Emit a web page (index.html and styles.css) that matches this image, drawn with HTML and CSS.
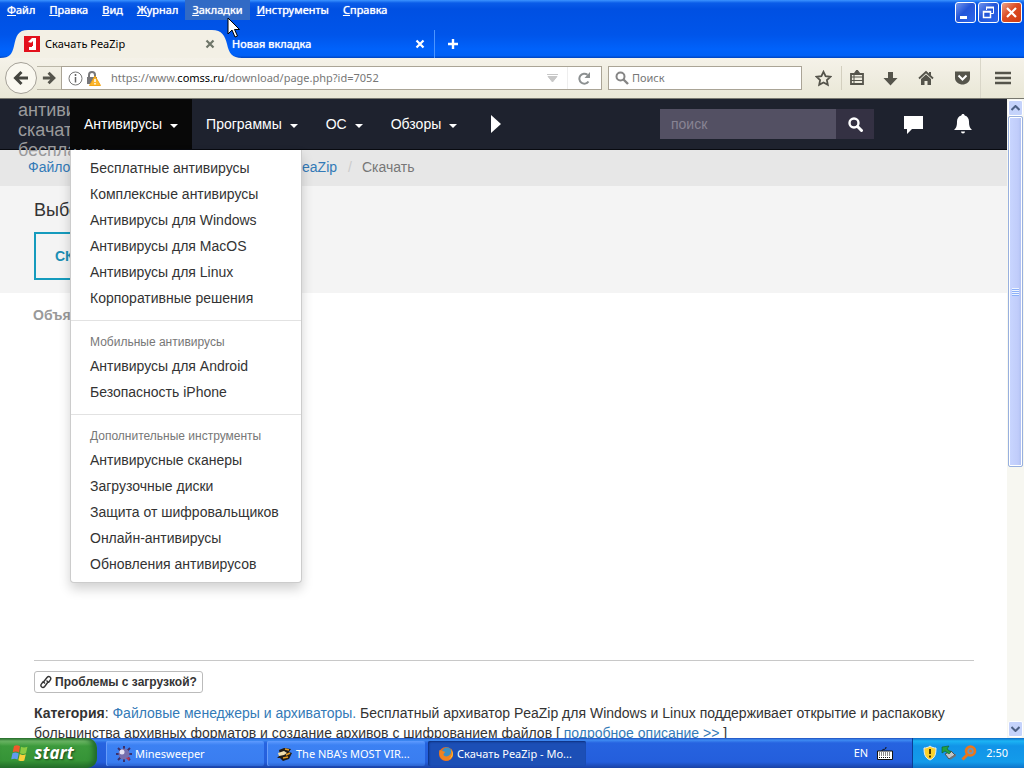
FILE: index.html
```html
<!DOCTYPE html>
<html lang="ru">
<head>
<meta charset="utf-8">
<title>Скачать PeaZip</title>
<link rel="stylesheet" href="styles.css">
</head>
<body>
<div class="titlebar">
  <div class="title-row">
    <nav class="menubar" aria-label="Меню">
      <button><u>Ф</u>айл</button>
      <button><u>П</u>равка</button>
      <button><u>В</u>ид</button>
      <button><u>Ж</u>урнал</button>
      <button class="hot"><u>З</u>акладки
        <svg class="cursor" width="14" height="21" viewBox="0 0 14 21" aria-hidden="true"><path d="M1 1v16l4-4 3 7 2.500-1-3-6.500h5z" fill="#fff" stroke="#000"/></svg>
      </button>
      <button><u>И</u>нструменты</button>
      <button><u>С</u>правка</button>
    </nav>
    <div class="window-buttons">
      <button aria-label="Свернуть"><svg width="19" height="19" viewBox="0 0 19 19"><path d="M4 14.500h7" stroke="#fff" stroke-width="3"/></svg></button>
      <button aria-label="Восстановить"><svg width="19" height="19" viewBox="0 0 19 19"><path d="M7.500 7V4.500h7v6H12" fill="none" stroke="#fff"/><path d="M7 4.500h8" stroke="#fff" stroke-width="2"/><path d="M4.500 8.500h7v6h-7zM4 9h8" fill="none" stroke="#fff" stroke-width="1.500"/></svg></button>
      <button class="close" aria-label="Закрыть"><svg width="19" height="19" viewBox="0 0 19 19"><path d="M5 5l9 9M14 5l-9 9" stroke="#fff" stroke-width="2.200"/></svg></button>
    </div>
  </div>
  <div class="tabs">
    <div class="tab active">
      <svg class="tab-shape" viewBox="0 0 242 28" preserveAspectRatio="none" aria-hidden="true"><path d="M0 28C10 28 12 24 14 16C16 6 18 0 28 0H212C222 0 225 6 227 14C229 23 232 28 242 28z" fill="#f3f0e5"/></svg>
      <svg width="16" height="16" viewBox="0 0 16 16" aria-hidden="true"><path d="M0 0h16v16H0z" fill="#e3101c"/><path d="M4 6l4-4h4v12H5v-3h3V7z" fill="#fff"/><path d="M7 7l2-2v5H7z" fill="#e3101c"/></svg>
      <span class="tab-title">Скачать PeaZip</span>
      <button class="tab-close" aria-label="Закрыть вкладку"><svg width="10" height="10" viewBox="0 0 10 10"><path d="M1.500 1.500l7 7M8.500 1.500l-7 7" stroke="#6f7669" stroke-width="2.200"/></svg></button>
    </div>
    <div class="tab second">
      <span class="tab-title">Новая вкладка</span>
      <button class="tab-close" aria-label="Закрыть вкладку"><svg width="10" height="10" viewBox="0 0 10 10"><path d="M1.500 1.500l7 7M8.500 1.500l-7 7" stroke="#fff" stroke-width="2.200"/></svg></button>
    </div>
    <button class="new-tab" aria-label="Новая вкладка"><svg width="12" height="12" viewBox="0 0 12 12"><path d="M6 1v10M1 6h10" stroke="#fff" stroke-width="2.400"/></svg></button>
  </div>
</div>

<div class="toolbar">
  <button class="back" aria-label="Назад"><svg width="16" height="16" viewBox="0 0 16 16"><path d="M15 8H3M8.500 2L2.500 8l6 6" fill="none" stroke="#45453f" stroke-width="3"/></svg></button>
  <button class="forward" aria-label="Вперёд"><svg width="14" height="14" viewBox="0 0 16 16"><path d="M1 8h12M7.500 2l6 6-6 6" fill="none" stroke="#55544c" stroke-width="3.400"/></svg></button>
  <div class="urlbar">
    <svg width="15" height="15" viewBox="0 0 15 15" aria-hidden="true"><circle cx="7.500" cy="7.500" r="6.500" fill="none" stroke="#777"/><path d="M7.500 6v5.500M7.500 3v2" stroke="#666" stroke-width="1.500"/></svg>
    <svg width="15" height="15" viewBox="0 0 15 15" aria-hidden="true"><path d="M3 7V4a3 3 0 0 1 6 0v3" fill="none" stroke="#77777a" stroke-width="2"/><path d="M1 6h10v7H1z" fill="#77777a"/><path d="M9 5l5.500 9.500h-11z" fill="#fcb72d" stroke="#f2a516"/><path d="M9 8v3M9 12v1.500" stroke="#fff" stroke-width="1.500"/></svg>
    <div class="url" role="textbox" aria-label="Адрес" contenteditable="true" spellcheck="false">https://www.<span>comss.ru</span>/download/page.php?id=7052</div>
    <svg width="11" height="8" viewBox="0 0 11 8" aria-hidden="true"><path d="M0 .5h11M1 2.500h9L5.500 8z" fill="#c7c7c7" stroke="#c7c7c7"/></svg>
    <button class="reload" aria-label="Обновить"><svg width="13" height="13" viewBox="0 0 13 13"><path d="M10.500 9.500A5 5 0 1 1 9.500 2.800" fill="none" stroke="#8c9091" stroke-width="2"/><path d="M12 0v6H6.500z" fill="#8c9091"/></svg></button>
  </div>
  <label class="searchbar">
    <svg width="14" height="14" viewBox="0 0 14 14" aria-hidden="true"><circle cx="5.500" cy="5.500" r="4" fill="none" stroke="#858585" stroke-width="2"/><path d="M8.500 8.500l4.500 4.500" stroke="#858585" stroke-width="2.400"/></svg>
    <input type="text" placeholder="Поиск" aria-label="Поиск">
  </label>
  <div class="tools">
    <button aria-label="Добавить в закладки"><svg width="17" height="17" viewBox="0 0 17 17"><path d="M8.500 1.800l2.100 4.400 4.800.6-3.500 3.300.9 4.800-4.300-2.400-4.300 2.400.9-4.800L1.600 6.800l4.800-.6z" fill="none" stroke="#55544b" stroke-width="1.800"/></svg></button>
    <button class="divided" aria-label="Закладки"><svg width="16" height="16" viewBox="0 0 16 16"><path d="M2 4h12v10H2z" fill="none" stroke="#55544b" stroke-width="1.800"/><path d="M5 4l3-4 3 4zM2 7h12M2 10.500h12" fill="#55544b" stroke="#55544b" stroke-width="1.200"/><path d="M5 4v10" stroke="#55544b"/></svg></button>
    <button aria-label="Загрузки"><svg width="15" height="15" viewBox="0 0 15 15"><path d="M5 1h5v6h4.500l-7 7.500L.5 7H5z" fill="#55544b"/></svg></button>
    <button aria-label="Домой"><svg width="16" height="16" viewBox="0 0 16 16"><path d="M1 8.500L8 2l7 6.500" fill="none" stroke="#55544b" stroke-width="1.800"/><path d="M3 9l5-4.500L13 9v6H9.500v-4h-3v4H3zM11 2h2v4l-2-2z" fill="#55544b"/></svg></button>
    <button aria-label="Pocket"><svg width="17" height="16" viewBox="0 0 17 16"><path d="M1 1.500h15V8c0 4-4 6.500-7.500 6.500S1 12 1 8z" fill="#55544b"/><path d="M4.500 5.500l4 4 4-4" fill="none" stroke="#fff" stroke-width="2"/></svg></button>
    <button class="burger" aria-label="Меню"><svg width="16" height="14" viewBox="0 0 16 14"><path d="M0 2h16M0 7h16M0 12h16" stroke="#55544b" stroke-width="2.600"/></svg></button>
  </div>
</div>

<div class="viewport">
  <main class="page">
    <header class="navbar">
      <a class="brand" href="#">антивирус скачать бесплатно</a>
      <div class="nav-item open">
        <button>Антивирусы<i class="caret"></i></button>
        <div class="dropdown">
          <a href="#">Бесплатные антивирусы</a>
          <a href="#">Комплексные антивирусы</a>
          <a href="#">Антивирусы для Windows</a>
          <a href="#">Антивирусы для MacOS</a>
          <a href="#">Антивирусы для Linux</a>
          <a href="#">Корпоративные решения</a>
          <hr>
          <h6>Мобильные антивирусы</h6>
          <a href="#">Антивирусы для Android</a>
          <a href="#">Безопасность iPhone</a>
          <hr>
          <h6>Дополнительные инструменты</h6>
          <a href="#">Антивирусные сканеры</a>
          <a href="#">Загрузочные диски</a>
          <a href="#">Защита от шифровальщиков</a>
          <a href="#">Онлайн-антивирусы</a>
          <a href="#">Обновления антивирусов</a>
        </div>
      </div>
      <div class="nav-item"><button>Программы<i class="caret"></i></button></div>
      <div class="nav-item"><button>ОС<i class="caret"></i></button></div>
      <div class="nav-item"><button>Обзоры<i class="caret"></i></button></div>
      <button class="more" aria-label="Далее"><svg width="10" height="18" viewBox="0 0 10 18"><path d="M0 0l10 9-10 9z" fill="#fff"/></svg></button>
      <form class="site-search">
        <input type="text" placeholder="поиск" aria-label="поиск">
        <button type="button" aria-label="Найти"><svg width="15" height="15" viewBox="0 0 15 15"><circle cx="6" cy="6" r="4.500" fill="none" stroke="#fff" stroke-width="2.400"/><path d="M9.500 9.500l4 4" stroke="#fff" stroke-width="3" stroke-linecap="round"/></svg></button>
      </form>
      <button class="icon-link" aria-label="Комментарии"><svg width="21" height="19" viewBox="0 0 21 19"><path d="M1 1h19v13H9l-5 5v-5H1z" fill="#fff"/></svg></button>
      <button class="icon-link bell" aria-label="Уведомления"><svg width="18" height="20" viewBox="0 0 18 20"><path d="M9 0c1 0 1.600.6 1.700 1.500C13.500 2.300 15 4.500 15 7.500c0 5 1 6.500 3 8.500H0c2-2 3-3.500 3-8.500 0-3 1.500-5.200 4.300-6C7.400.6 8 0 9 0zM7 17.500h4a2 2 0 0 1-4 0z" fill="#fff"/></svg></button>
    </header>
    <ol class="breadcrumb">
      <li><a href="#">Файловые менеджеры и архиваторы</a></li>
      <li><a href="#">PeaZip</a></li>
      <li>Скачать</li>
    </ol>
    <section class="download">
      <h1>Выберите файл</h1>
      <button>СКАЧАТЬ</button>
    </section>
    <section class="ad"><strong>Объявление</strong></section>
    <section class="details">
      <button class="problem"><svg width="12" height="14" viewBox="0 0 12 14" aria-hidden="true"><path d="M5 8.500L3.500 7 7 2.500c2-2.300 5 .2 3.200 2.600L8.500 7.500M6.500 5.500L8 7l-3.300 4.500c-2 2.300-5-.2-3.200-2.600L3.300 6.500" fill="none" stroke="#333" stroke-width="1.400"/></svg>Проблемы с загрузкой?</button>
      <p><b>Категория</b>: <a href="#">Файловые менеджеры и архиваторы.</a> Бесплатный архиватор PeaZip для Windows и Linux поддерживает открытие и распаковку большинства архивных форматов и создание архивов с шифрованием файлов [ <a href="#">подробное описание &gt;&gt;</a> ]</p>
    </section>
  </main>
  <div class="scrollbar" aria-hidden="true">
    <div class="arrow"><svg width="9" height="6" viewBox="0 0 9 6"><path d="M.5 5l4-4 4 4" fill="none" stroke="#4d6185" stroke-width="2"/></svg></div>
    <div class="thumb"><span class="grip"></span></div>
    <div class="track"></div>
    <div class="arrow"><svg width="9" height="6" viewBox="0 0 9 6"><path d="M.5 1l4 4 4-4" fill="none" stroke="#4d6185" stroke-width="2"/></svg></div>
  </div>
</div>

<footer class="taskbar">
  <button class="start"><svg width="18" height="18" viewBox="0 0 18 18" aria-hidden="true"><path d="M3 2c2-1 4-1 6 .3L8 8.500C6 7.300 4 7.300 1.700 8.200z" fill="#f0592b"/><path d="M10 2.800c2 1 4 1 6.500 0L15 9.200c-2 1-4 .8-6 0z" fill="#8ccb43"/><path d="M1.500 9.200c2-1 4-.8 6.200.3L6.500 15.500c-2-1.200-4-1-6.300-.3z" fill="#619bef"/><path d="M8.800 10c2 1.200 4 1.200 6 .3l-1.500 6.200c-2 1-4 .7-6-.3z" fill="#f8cf3b"/></svg>start</button>
  <div class="tasks">
    <button><svg width="16" height="16" viewBox="0 0 16 16" aria-hidden="true"><path d="M8 0v16M0 8h16M2 2l12 12M14 2L2 14" stroke="#39306e" stroke-width="2"/><circle cx="8" cy="8" r="5.500" fill="#766fae"/><circle cx="6" cy="6" r="2.500" fill="#e4e2f4"/><path d="M10 12l4-1-1 4z" fill="#b13453"/></svg><span>Minesweeper</span></button>
    <button><svg width="16" height="16" viewBox="0 0 16 16" aria-hidden="true"><path d="M2 4l5-2 7 1-2 3 3 1-3 6-6 2-3-3-3 0 3-3z" fill="#211b16"/><path d="M1 7l6-2 3 2-3 2-5 1z" fill="#f1dfaf"/><path d="M9 9l4-2M6 12l5-1M8 3l4 1" stroke="#e39a22" stroke-width="1.600"/></svg><span>The NBA's MOST VIR...</span></button>
    <button class="pressed"><svg width="16" height="16" viewBox="0 0 16 16" aria-hidden="true"><circle cx="8" cy="8" r="7" fill="#e56a1c"/><circle cx="9" cy="6.500" r="5" fill="#3a8fc4"/><path d="M1.500 4c2 1 4 1 6 2-1 1-2 1-2 3 1 2 5 2 7-1 1-2 1-4 0-6 4 4 3 10-1 12C6 16 0 12 1.500 4z" fill="#ee8322"/><path d="M13 4c2 3 1 7-2 9 4-1 5-6 2-9z" fill="#ffd03b"/></svg><span>Скачать PeaZip - Mo...</span></button>
  </div>
  <div class="lang"><span>EN</span><svg width="16" height="13" viewBox="0 0 16 13" aria-hidden="true"><path d="M5 4c0-3 4 0 4-4" fill="none" stroke="#111"/><path d="M.5 4h15v8.500H.5z" fill="#fff" stroke="#111"/><path d="M2 6h12M2 8h12M2 10.500h12" stroke="#111" stroke-dasharray="1 1"/></svg></div>
  <div class="tray">
    <svg width="14" height="16" viewBox="0 0 14 16" aria-hidden="true"><path d="M7 1c2 1.500 4 2 6 2 0 6-1 10-6 12C2 13 1 9 1 3c2 0 4-.5 6-2z" fill="#fbd22c" stroke="#e9edf1"/><path d="M7 4v5M7 10.500v2" stroke="#4d3b00" stroke-width="2"/></svg>
    <svg width="16" height="16" viewBox="0 0 16 16" aria-hidden="true"><path d="M4 9l6-3 4 4-6 4z" fill="#c2c5c7" stroke="#4a5357"/><path d="M10 12l5-3v2l-6 4z" fill="#6d7477"/><path d="M1 2l7-1-2 3 4 3-2 2-4-3-3 2z" fill="#21a143" stroke="#115c27" stroke-width=".6"/></svg>
    <svg width="16" height="16" viewBox="0 0 16 16" aria-hidden="true"><circle cx="9.500" cy="6" r="4.500" fill="#7196b4" stroke="#ec7619" stroke-width="2.600"/><path d="M6.500 9.500L1.500 14.500" stroke="#ec7619" stroke-width="3"/><circle cx="9.500" cy="6" r="1.500" fill="#ec7619"/></svg>
    <time>2:50</time>
  </div>
</footer>
</body>
</html>
```
FILE: styles.css
```css
* { box-sizing: border-box; }
body { margin: 0; height: 100vh; overflow: hidden; display: flex; flex-direction: column; font: 11px/14px "Noto Sans", sans-serif; color: #000; }
button { border: 0; padding: 0; margin: 0; background: none; font: inherit; color: inherit; display: flex; align-items: center; justify-content: center; flex-shrink: 0; }
input { font: inherit; border: 0; outline: 0; min-width: 0; }
svg { display: block; flex-shrink: 0; }
a { color: #337ab7; text-decoration: none; }

.titlebar { flex: none; height: 58px; background: linear-gradient(#3c94ff 0, #0a5ce8 3px, #0050e2 9px, #0055ea 60%, #0062fb 85%, #0060f5 96%, #0043bd); }
.title-row { display: flex; justify-content: space-between; height: 30px; }
.menubar { display: flex; height: 20px; color: #fff; }
.menubar button { position: relative; display: block; padding: 0 7px; line-height: 20px; text-shadow: 0 0 1px #fff; }
.menubar .hot { background: #316ac5; }
.cursor { position: absolute; left: 42px; top: 17px; z-index: 5; }
.window-buttons { display: flex; gap: 2px; padding: 2px 2px 0 0; }
.window-buttons button { width: 21px; height: 21px; border: 1px solid #fff; border-radius: 3px; background: linear-gradient(135deg, #7295ed, #2355d8 45%, #2c66eb); }
.window-buttons .close { background: linear-gradient(135deg, #eda389, #dc4c24 45%, #cf3c12); }

.tabs { display: flex; height: 28px; }
.tab { position: relative; display: flex; align-items: center; }
.tab.active { width: 230px; padding: 0 14px 0 24px; gap: 5px; }
.tab > * { position: relative; }
.tab .tab-shape { position: absolute; left: 0; top: 0; width: 242px; height: 28px; }
.tab-title { flex: 1; white-space: nowrap; }
.tab-close { width: 12px; height: 12px; }
.second { width: 205px; padding: 0 8px 0 2px; color: #fff; text-shadow: 0 0 1px #fff; border-right: 1px solid #4c95ff; }
.new-tab { width: 36px; }

.toolbar { flex: none; display: flex; align-items: center; height: 41px; padding-left: 5px; background: linear-gradient(#f5f2e9, #e9e7d6); border-bottom: 1px solid #77776f; }
.back { width: 32px; height: 32px; border: 1px solid #a5a198; border-radius: 50%; background: #faf8f0; z-index: 1; }
.forward { width: 24px; height: 24px; border: 1px solid #bbb7a8; border-width: 1px 0; }
.urlbar { flex: 544; display: flex; align-items: center; gap: 3px; height: 24px; padding-left: 6px; border: 1px solid #aaa496; background: #fff; color: #777; }
.url { flex: 1; padding-left: 7px; outline: 0; white-space: nowrap; overflow: hidden; }
.url span { color: #000; }
.reload { width: 34px; height: 22px; margin-left: 6px; border-left: 1px solid #eee; }
.searchbar { flex: 190; display: flex; align-items: center; gap: 3px; height: 24px; margin-left: 6px; padding-left: 6px; border: 1px solid #aaa496; background: #fff; }
.searchbar input { flex: 1; padding: 0; }
.searchbar input::placeholder { color: #777; opacity: 1; }
.tools { display: flex; align-items: center; flex: none; margin-left: 3px; }
.tools button { width: 36px; height: 24px; }
.tools .divided { width: 31px; border-left: 1px solid #d3cfbf; }
.tools .burger { width: 44px; height: 40px; border-left: 1px solid #d9d6c8; }

.viewport { flex: 1; min-height: 0; display: flex; }
.page { flex: 1; min-width: 0; overflow: hidden; background: #fff; color: #333; font: 14px/20px "Liberation Sans", Arial, sans-serif; }
.navbar { display: flex; align-items: center; height: 51px; padding-left: 18px; background: #1e222e; border-bottom: 1px solid #080a10; color: #fff; }
.brand { align-self: flex-start; width: 52px; height: 50px; padding-top: 1px; font-size: 18px; line-height: 20px; color: #9a9a9c; position: relative; }
.nav-item { position: relative; align-self: flex-start; height: 51px; }
.nav-item > button { height: 50px; padding: 0 14px; gap: 8px; }
.nav-item.open { z-index: 3; }
.nav-item.open > button { background: #080808; }
.caret { margin-top: 3px; border: 4px solid transparent; border-top-color: #fff; border-bottom: 0; }
.dropdown { position: absolute; left: 0; top: 100%; width: 232px; padding: 5px 0; background: #fff; border: 1px solid #ccc; border-top: 0; border-radius: 0 0 4px 4px; box-shadow: 0 6px 12px rgba(0,0,0,.18); }
.dropdown a { display: block; padding: 3px 19px; color: #333; white-space: nowrap; }
.dropdown hr { height: 1px; margin: 9px 0; border: 0; background: #e2e2e2; }
.dropdown h6 { margin: 0; padding: 4px 19px 2px; font: 12px/17px "Liberation Sans", Arial, sans-serif; color: #777; white-space: nowrap; }
.more { margin-left: 20px; }
.site-search { display: flex; margin-left: auto; height: 30px; }
.site-search input { width: 176px; padding: 0 11px; background: #535063; color: #fff; }
.site-search input::placeholder { color: #888493; opacity: 1; }
.site-search button { width: 38px; background: #343143; }
.icon-link { width: 22px; margin-left: 28px; }
.icon-link.bell { margin-right: 33px; }

.breadcrumb { display: flex; margin: 0; padding: 7px 28px 9px; list-style: none; background: #e7e7e7; color: #777; white-space: nowrap; }
.breadcrumb li + li::before { content: "/"; padding: 0 10px 0 11px; color: #ccc; }
.download { padding: 14px 34px 13px; background: #f4f4f4; }
.download h1 { margin: 0 0 12px; font-size: 18px; line-height: 20px; font-weight: 400; }
.download button { height: 48px; padding: 0 19px; border: 2px solid #159bbd; color: #1c8fb5; font-weight: 700; }
.ad { min-height: 367px; padding: 12px 33px; color: #999; }
.details { margin: 0 33px 0 34px; padding-top: 10px; border-top: 1px solid #c8c8c8; }
.problem { height: 22px; padding: 0 5px; gap: 3px; border: 1px solid #bbb; border-radius: 3px; font-size: 12px; font-weight: 700; }
.details p { margin: 10px 0 0; }

.scrollbar { display: flex; flex-direction: column; flex: none; width: 17px; padding: 1px; background: #f7f7f1; }
.arrow { display: flex; align-items: center; justify-content: center; height: 16px; background: #c5d3fb; border: 1px solid #fff; border-radius: 2px; }
.thumb { flex: 351; display: flex; align-items: center; justify-content: center; background: linear-gradient(90deg, #c9d6ff, #c0ccfa 70%, #acbdf0); border: 1px solid #98b0df; border-radius: 2px; box-shadow: inset 0 0 0 1px #fff; }
.grip { width: 7px; height: 8px; background: repeating-linear-gradient(#eef4fe 0, #eef4fe 1px, #8cb0f8 1px, #8cb0f8 2px); }
.track { flex: 255; }

.taskbar { position: relative; z-index: 4; display: flex; flex: none; height: 30px; background: linear-gradient(#1f4ebd 0, #3f8cf3 2px, #2663e0 5px, #245edc 80%, #1941a5); color: #fff; }
.start { width: 97px; padding: 0 12px 0 0; gap: 5px; border-radius: 0 10px 10px 0; background: linear-gradient(#2d722f 0, #6fb967 3px, #3c9a3c 8px, #369437 75%, #25702a); box-shadow: inset -4px 0 5px #216b2b; font: italic bold 17px/24px "Noto Sans", sans-serif; text-shadow: 1px 1px 2px #1a4419; }
.tasks { display: flex; flex: 1; gap: 3px; padding: 3px 0 2px 9px; min-width: 0; }
.tasks button { flex: 0 1 158px; min-width: 0; justify-content: flex-start; gap: 3px; padding: 0 10px; border-radius: 2px; background: linear-gradient(#5f9bff, #3c81f3 4px, #3a7df0 85%, #2c65d2); box-shadow: inset 1px 0 #689dfa; white-space: nowrap; }
.tasks .pressed { background: #1c4fb6; box-shadow: inset 1px 1px 2px #0d2f7c; }
.lang { display: flex; align-items: center; gap: 9px; padding-right: 19px; }
.tray { display: flex; align-items: center; gap: 4px; padding: 0 16px 0 10px; background: linear-gradient(#0e6cc8 0, #1cb4f4 3px, #1194e8 8px, #139bea 80%, #0d74ca); border-left: 1px solid #0a3e96; }
.tray time { margin-left: 5px; }
```
